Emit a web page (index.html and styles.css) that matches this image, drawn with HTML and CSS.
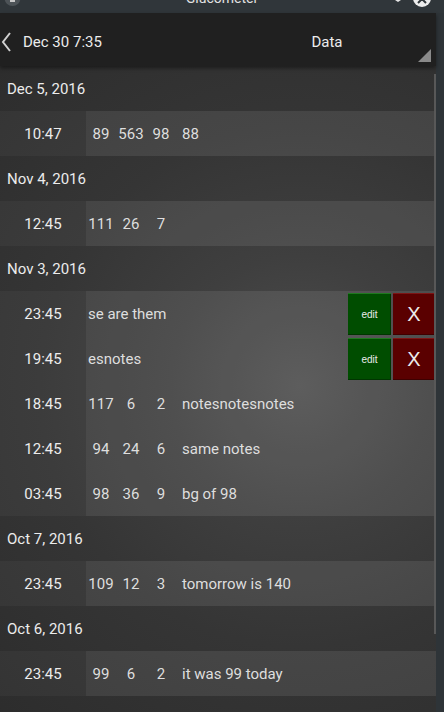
FILE: index.html
```html
<!DOCTYPE html>
<html>
<head>
<meta charset="utf-8">
<title>Glucometer</title>
<link rel="stylesheet" href="styles.css">
</head>
<body>
<div class="window">
  <div class="titlebar">
    <div class="tb-left">
      <svg width="30" height="13" viewBox="0 0 30 13"><circle cx="12.5" cy="-2" r="8" fill="#4d5357"/><rect x="10" y="0" width="5" height="2" fill="#c8c8c8"/></svg>
    </div>
    <div class="tb-title">Glucometer</div>
    <div class="tb-right">
      <svg width="50" height="13" viewBox="0 0 50 13"><path d="M3 0 L9 0 L6 2 Z" fill="#e6e6e6"/><circle cx="30" cy="-2" r="9" fill="#ececec"/><path d="M26 -5 L34 3 M34 -5 L26 3" stroke="#30363a" stroke-width="2"/></svg>
    </div>
  </div>
  <div class="main">
    <div class="app">
      <header class="appbar">
        <div class="nav">
          <svg class="back" width="14" height="22" viewBox="0 0 14 22"><polyline points="10,2 3,11 10,20" fill="none" stroke="#d0d0d0" stroke-width="2"/></svg>
          <span class="nav-date">Dec 30 7:35</span>
        </div>
        <div class="spinner">
          <span>Data</span>
          <svg class="tri" width="13" height="13" viewBox="0 0 13 13"><polygon points="13,0 13,13 0,13" fill="#8a8a8a"/></svg>
        </div>
      </header>
      <div class="list">
        <div class="date-row">Dec 5, 2016</div>
        <div class="entry"><div class="time">10:47</div><div class="data"><span class="num">89</span><span class="num">563</span><span class="num">98</span><span class="note">88</span></div></div>
        <div class="date-row">Nov 4, 2016</div>
        <div class="entry"><div class="time">12:45</div><div class="data"><span class="num">111</span><span class="num">26</span><span class="num">7</span><span class="note"></span></div></div>
        <div class="date-row">Nov 3, 2016</div>
        <div class="entry"><div class="time">23:45</div><div class="data swiped"><span class="note">se are them</span></div><div class="actions"><button class="btn edit">edit</button><button class="btn del">X</button></div></div>
        <div class="entry"><div class="time">19:45</div><div class="data swiped"><span class="note">esnotes</span></div><div class="actions"><button class="btn edit">edit</button><button class="btn del">X</button></div></div>
        <div class="entry"><div class="time">18:45</div><div class="data"><span class="num">117</span><span class="num">6</span><span class="num">2</span><span class="note">notesnotesnotes</span></div></div>
        <div class="entry"><div class="time">12:45</div><div class="data"><span class="num">94</span><span class="num">24</span><span class="num">6</span><span class="note">same notes</span></div></div>
        <div class="entry"><div class="time">03:45</div><div class="data"><span class="num">98</span><span class="num">36</span><span class="num">9</span><span class="note">bg of 98</span></div></div>
        <div class="date-row">Oct 7, 2016</div>
        <div class="entry"><div class="time">23:45</div><div class="data"><span class="num">109</span><span class="num">12</span><span class="num">3</span><span class="note">tomorrow is 140</span></div></div>
        <div class="date-row">Oct 6, 2016</div>
        <div class="entry"><div class="time">23:45</div><div class="data"><span class="num">99</span><span class="num">6</span><span class="num">2</span><span class="note">it was 99 today</span></div></div>
        <div class="scrollbar"></div>
      </div>
    </div>
    <div class="frame"></div>
  </div>
</div>
</body>
</html>
```
FILE: styles.css
```css
* { box-sizing: border-box; }
html, body { margin: 0; padding: 0; background: #2e3438; }
body {
  width: 444px;
  height: 712px;
  overflow: hidden;
  font-family: Roboto, "Noto Sans", sans-serif;
}
.window { display: flex; flex-direction: column; height: 712px; }

.titlebar {
  height: 13px;
  background: #30363a;
  display: grid;
  grid-template-columns: 1fr auto 1fr;
  overflow: hidden;
}
.tb-left { display: flex; }
.tb-right { display: flex; justify-content: flex-end; padding-right: 2px; }
.tb-title {
  font-size: 14px;
  line-height: 14px;
  color: #e2e2e2;
  margin-top: -9px;
  height: 14px;
}

.main { flex: 1; display: flex; min-height: 0; }
.app { width: 436px; display: flex; flex-direction: column; background: #2c2c2c; }
.frame { flex: 1; background: #2e3438; }

.appbar {
  height: 53px;
  background: #202020;
  display: flex;
  position: relative;
  z-index: 1;
  box-shadow: 0 2px 4px rgba(0, 0, 0, 0.45);
  color: #ececec;
  font-size: 15px;
}
.nav { width: 218px; display: flex; align-items: center; padding: 5px 0 0 0; }
.back { margin-right: 9px; }
.spinner {
  flex: 1;
  display: flex;
  align-items: center;
  justify-content: center;
  padding-top: 5px;
  position: relative;
}
.tri { position: absolute; right: 5px; bottom: 4px; }

.list {
  flex: 1;
  position: relative;
  overflow: hidden;
  background: radial-gradient(circle at 300px 320px, #4e4e4e 0, #3f3f3f 130px, #353535 260px, #2c2c2c 460px);
  font-size: 15px;
}
.date-row {
  height: 45px;
  display: flex;
  align-items: center;
  padding-left: 7px;
  color: #ececec;
}
.entry { height: 45px; display: flex; color: #dedede; }
.time {
  width: 86px;
  display: flex;
  align-items: center;
  justify-content: center;
  background: rgba(255, 255, 255, 0.035);
  color: #ececec;
}
.data {
  flex: 1;
  display: flex;
  align-items: center;
  background: rgba(255, 255, 255, 0.085);
  overflow: hidden;
  white-space: nowrap;
}
.num { width: 30px; text-align: center; flex: none; }
.note { padding-left: 6px; }
.swiped .note { padding-left: 2px; }

.actions {
  display: flex;
  gap: 2px;
  padding: 2px 1px 1px 0;
  background: rgba(255, 255, 255, 0.085);
}
.btn {
  border: 0;
  margin: 0;
  padding: 0;
  height: 42px;
  color: #ececec;
  font-family: "Liberation Sans", Arial, sans-serif;
  display: flex;
  align-items: center;
  justify-content: center;
}
.edit {
  width: 43px;
  background: #004d00;
  border-top: 1px solid #1f7a1f;
  box-shadow: inset -1px -1px 0 rgba(0, 0, 0, 0.3);
  font-size: 10px;
}
.del {
  width: 42px;
  background: #5a0000;
  border-top: 1px solid #7e1515;
  box-shadow: inset -1px -1px 0 rgba(0, 0, 0, 0.3);
  font-size: 20px;
}

.scrollbar {
  position: absolute;
  right: 0;
  top: 8px;
  width: 2px;
  height: 560px;
  background: #585858;
}
```
